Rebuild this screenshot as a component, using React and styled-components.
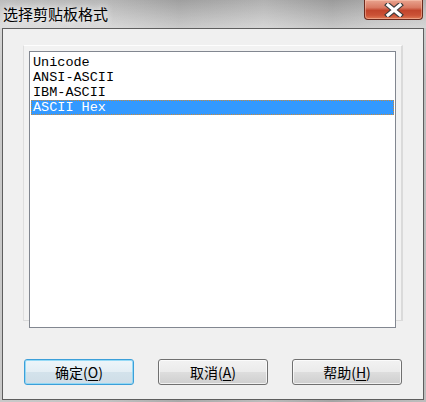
import React, { useState } from "react";
import styled, { createGlobalStyle } from "styled-components";

const GlobalStyle = createGlobalStyle`
  html, body {
    margin: 0;
    padding: 0;
    background: #b9b9b9;
  }
  * {
    box-sizing: border-box;
  }
`;

const Window = styled.div`
  width: 426px;
  height: 402px;
  display: flex;
  flex-direction: column;
  background:
    linear-gradient(to bottom, rgba(255, 255, 255, 0) 0%, rgba(255, 255, 255, 0.25) 7%, rgba(255, 255, 255, 0) 20%),
    linear-gradient(90deg, #c9c9c9 0%, #c2c2c2 25%, #a9a9a9 42%, #b2b2b2 52%, #bcbcbc 62%, #a4a4a4 78%, #b4b4b4 88%, #bdbdbd 100%);
`;

const TitleBar = styled.div`
  height: 28px;
  flex: none;
  display: flex;
  justify-content: space-between;
  align-items: flex-start;
  background: linear-gradient(to bottom, rgba(0, 0, 0, 0.06) 0%, rgba(255, 255, 255, 0.18) 100%);
`;

const Title = styled.div`
  padding-left: 3px;
  line-height: 27px;
  font-family: "Noto Sans CJK SC", "Noto Sans", sans-serif;
  font-size: 15px;
  color: #000;
  text-shadow: 0 0 6px rgba(255, 255, 255, 0.95), 0 0 10px rgba(255, 255, 255, 0.7);
`;

const CloseButton = styled.div`
  width: 59px;
  height: 20px;
  margin-right: 3px;
  display: flex;
  align-items: center;
  justify-content: center;
  border: 1px solid #6b2a1e;
  border-top: none;
  border-radius: 0 0 4px 4px;
  background: linear-gradient(to bottom, #e9a48f 0%, #d97962 40%, #c2452c 55%, #cb5236 80%, #e07a55 100%);
  box-shadow: inset 0 0 0 1px rgba(255, 210, 190, 0.45);
`;

const Client = styled.div`
  flex: 1;
  margin: 0 2px 2px 2px;
  border: 1px solid #5e5e5e;
  background: #f0f0f0;
  display: flex;
  flex-direction: column;
  padding: 16px 0 0 20px;
`;

const Panel = styled.div`
  width: 380px;
  height: 276px;
  padding: 5px 6px 0 5px;
  background: #f2f2f2;
  border-top: 1px solid #fdfdfd;
  border-left: 1px solid #dedede;
  border-right: 2px solid #dadada;
  border-bottom: 1px solid #dadada;
`;

const ListBox = styled.div`
  width: 367px;
  height: 277px;
  border: 1px solid #828790;
  background: #fff;
  padding: 3px 1px 0 1px;
  display: flex;
  flex-direction: column;
`;

const ListItem = styled.div`
  height: 15px;
  padding-left: 2px;
  font-family: "Liberation Mono", "DejaVu Sans Mono", monospace;
  font-size: 13.5px;
  line-height: 15px;
  white-space: pre;
  color: ${(p) => (p.$selected ? "#fff" : "#000")};
  background: ${(p) => (p.$selected ? "#3399ff" : "transparent")};
  outline: ${(p) => (p.$selected ? "1px dotted #c98a3c" : "none")};
  outline-offset: -1px;
  cursor: default;
`;

const ButtonRow = styled.div`
  display: flex;
  gap: 24px;
  margin-top: 38px;
  padding-left: 1px;
`;

const Button = styled.div`
  width: 110px;
  height: 26px;
  display: flex;
  align-items: center;
  justify-content: center;
  border-radius: 3px;
  font-family: "Noto Sans CJK SC", "Noto Sans", sans-serif;
  font-size: 14px;
  color: #000;
  border: 1px solid ${(p) => (p.$default ? "#3c9fd9" : "#707070")};
  background: ${(p) =>
    p.$default
      ? "linear-gradient(to bottom, #edf5fa 0%, #e4eef4 48%, #d3e2eb 52%, #cfdde7 100%)"
      : "linear-gradient(to bottom, #f2f2f2 0%, #ebebeb 48%, #dddddd 52%, #cfcfcf 100%)"};
  box-shadow: ${(p) =>
    p.$default
      ? "inset 0 0 0 1px rgba(140, 215, 245, 0.9)"
      : "inset 0 0 0 1px rgba(255, 255, 255, 0.7)"};
  cursor: default;
`;

const Mnemonic = styled.span`
  text-decoration: underline;
  text-underline-offset: 2px;
`;

const items = ["Unicode", "ANSI-ASCII", "IBM-ASCII", "ASCII Hex"];

function CloseGlyph() {
  return (
    <svg width="20" height="14" viewBox="0 0 20 14">
      <path d="M4 2 L16 12 M16 2 L4 12" stroke="#3c3c3c" strokeWidth="5.5" strokeLinecap="square" />
      <path d="M4 2 L16 12 M16 2 L4 12" stroke="#ffffff" strokeWidth="3.2" strokeLinecap="square" />
    </svg>
  );
}

export default function App() {
  const [selected, setSelected] = useState(3);

  return (
    <>
      <GlobalStyle />
      <Window>
        <TitleBar>
          <Title>选择剪贴板格式</Title>
          <CloseButton>
            <CloseGlyph />
          </CloseButton>
        </TitleBar>
        <Client>
          <Panel>
            <ListBox>
              {items.map((item, i) => (
                <ListItem key={item} $selected={i === selected} onClick={() => setSelected(i)}>
                  {item}
                </ListItem>
              ))}
            </ListBox>
          </Panel>
          <ButtonRow>
            <Button $default>
              确定(<Mnemonic>O</Mnemonic>)
            </Button>
            <Button>
              取消(<Mnemonic>A</Mnemonic>)
            </Button>
            <Button>
              帮助(<Mnemonic>H</Mnemonic>)
            </Button>
          </ButtonRow>
        </Client>
      </Window>
    </>
  );
}
